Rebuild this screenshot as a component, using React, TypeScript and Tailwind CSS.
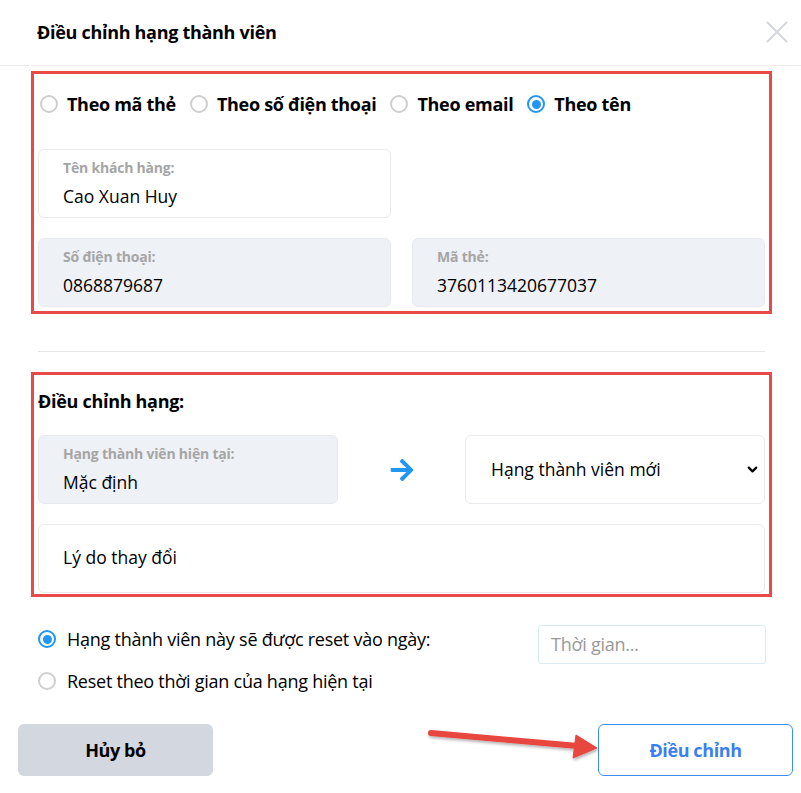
import { ChevronDown } from 'lucide-react'
import { FaArrowRight } from 'react-icons/fa'

const FONT = { fontFamily: '"Open Sans", "Noto Sans", sans-serif' }

function Radio({ checked }: { checked?: boolean }) {
  return checked ? (
    <span className="flex h-[18px] w-[18px] shrink-0 items-center justify-center rounded-full border-2 border-[#2196f3] bg-white">
      <span className="h-[9px] w-[9px] rounded-full bg-[#2196f3]" />
    </span>
  ) : (
    <span className="h-[18px] w-[18px] shrink-0 rounded-full border-2 border-[#cfcfcf] bg-white" />
  )
}

function Field({ label, value, muted }: { label: string; value: string; muted?: boolean }) {
  return (
    <div
      className={`flex h-[69px] flex-col rounded-md border border-[#e8eaee] px-6 pt-[10px] ${
        muted ? 'bg-[#eef1f6]' : 'bg-white'
      }`}
    >
      <div className="text-[14px] font-bold leading-4 tracking-[-0.2px] text-[#a5a5a5]">{label}</div>
      <div className="mt-[8px] text-[17.5px] leading-6 text-black">{value}</div>
    </div>
  )
}

export default function App() {
  const searchModes = [
    { label: 'Theo mã thẻ' },
    { label: 'Theo số điện thoại' },
    { label: 'Theo email' },
    { label: 'Theo tên', checked: true },
  ]

  return (
    <div className="relative h-[793px] w-[801px] overflow-hidden bg-white text-black" style={FONT}>
      {/* header */}
      <div className="flex h-[66px] items-center justify-between border-b border-[#ececec] pl-[37px] pr-[13px]">
        <h1 className="text-[18px] font-bold tracking-[-0.3px]">Điều chỉnh hạng thành viên</h1>
        <svg width="22" height="22" viewBox="0 0 22 22" className="-mt-[2px]">
          <path d="M1 1 21 21M21 1 1 21" stroke="#d4d7de" strokeWidth="2" />
        </svg>
      </div>

      <div className="pl-[31px] pr-[29px] pt-[5px]">
        {/* search box */}
        <div className="border-[3px] border-[#e84a47] px-[4px] pb-[4px] pt-[16px]">
          <div className="flex h-[28px] items-center gap-[14px] pl-[2px]">
            {searchModes.map((m) => (
              <label key={m.label} className="flex items-center gap-[9px] text-[18px] font-bold tracking-[-0.3px]">
                <Radio checked={m.checked} />
                <span>{m.label}</span>
              </label>
            ))}
          </div>
          <div className="mt-[31px] grid grid-cols-2 gap-x-[21px] gap-y-[20px]">
            <Field label="Tên khách hàng:" value="Cao Xuan Huy" />
            <div />
            <Field label="Số điện thoại:" value="0868879687" muted />
            <Field label="Mã thẻ:" value="3760113420677037" muted />
          </div>
        </div>

        <div className="mx-[7px] mt-[37px] border-t border-[#e6e6e6]" />

        {/* rank box */}
        <div className="mt-[20px] border-[3px] border-[#e84a47] px-[4px] pb-[1px] pt-[14px]">
          <div className="text-[18px] font-bold leading-6 tracking-[-0.3px]">Điều chỉnh hạng:</div>
          <div className="mt-[22px] flex items-center">
            <div className="w-[300px]">
              <Field label="Hạng thành viên hiện tại:" value="Mặc định" muted />
            </div>
            <div className="flex flex-1 justify-center">
              <FaArrowRight className="h-[26px] w-[26px] text-[#2196f3]" />
            </div>
            <div className="flex h-[69px] w-[300px] items-center justify-between rounded-md border border-[#e8eaee] bg-white pl-[25px] pr-[4px]">
              <span className="text-[17.5px]">Hạng thành viên mới</span>
              <ChevronDown className="h-[15px] w-[15px] text-black" strokeWidth={3.5} />
            </div>
          </div>
          <div className="mt-[20px] flex h-[69px] items-center rounded-md border border-[#e8eaee] px-6 pb-[3px] text-[17.5px]">
            Lý do thay đổi
          </div>
        </div>

        {/* reset options */}
        <div className="mt-[28px] flex items-start justify-between pl-[7px] pr-[6px]">
          <div className="flex flex-col gap-[18px] pt-[2px]">
            <label className="flex h-[24px] items-center gap-[11px] text-[18px] tracking-[-0.25px]">
              <Radio checked />
              <span>Hạng thành viên này sẽ được reset vào ngày:</span>
            </label>
            <label className="flex h-[24px] items-center gap-[11px] text-[18px] tracking-[-0.25px]">
              <Radio />
              <span>Reset theo thời gian của hạng hiện tại</span>
            </label>
          </div>
          <div className="flex h-[39px] w-[228px] items-center rounded-[3px] border border-[#d9ebf7] px-[12px] text-[18px] tracking-[-0.25px] text-[#9a9a9a]">
            Thời gian...
          </div>
        </div>
      </div>

      {/* footer buttons */}
      <div className="mt-[31px] flex justify-between pl-[18px] pr-[8px]">
        <button className="h-[52px] w-[195px] rounded-md bg-[#d3d7df] text-[18px] font-bold tracking-[-0.4px]">Hủy bỏ</button>
        <button className="h-[52px] w-[195px] rounded-md border border-[#3b8ff0] bg-white text-[18px] font-bold tracking-[-0.4px] text-[#3b7ff0]">
          Điều chỉnh
        </button>
      </div>

      {/* annotation arrow */}
      <svg className="pointer-events-none absolute left-0 top-0" width="801" height="793">
        <defs>
          <filter id="sh" x="-10%" y="-50%" width="120%" height="200%">
            <feDropShadow dx="1" dy="2" stdDeviation="1.5" floodColor="#000" floodOpacity="0.3" />
          </filter>
        </defs>
        <g filter="url(#sh)" fill="#e8463f" stroke="#e8463f">
          <line x1="431" y1="733" x2="578" y2="746" strokeWidth="6" strokeLinecap="round" />
          <polygon points="576,735 597,748 573,758" strokeWidth="1" strokeLinejoin="round" />
        </g>
      </svg>
    </div>
  )
}
